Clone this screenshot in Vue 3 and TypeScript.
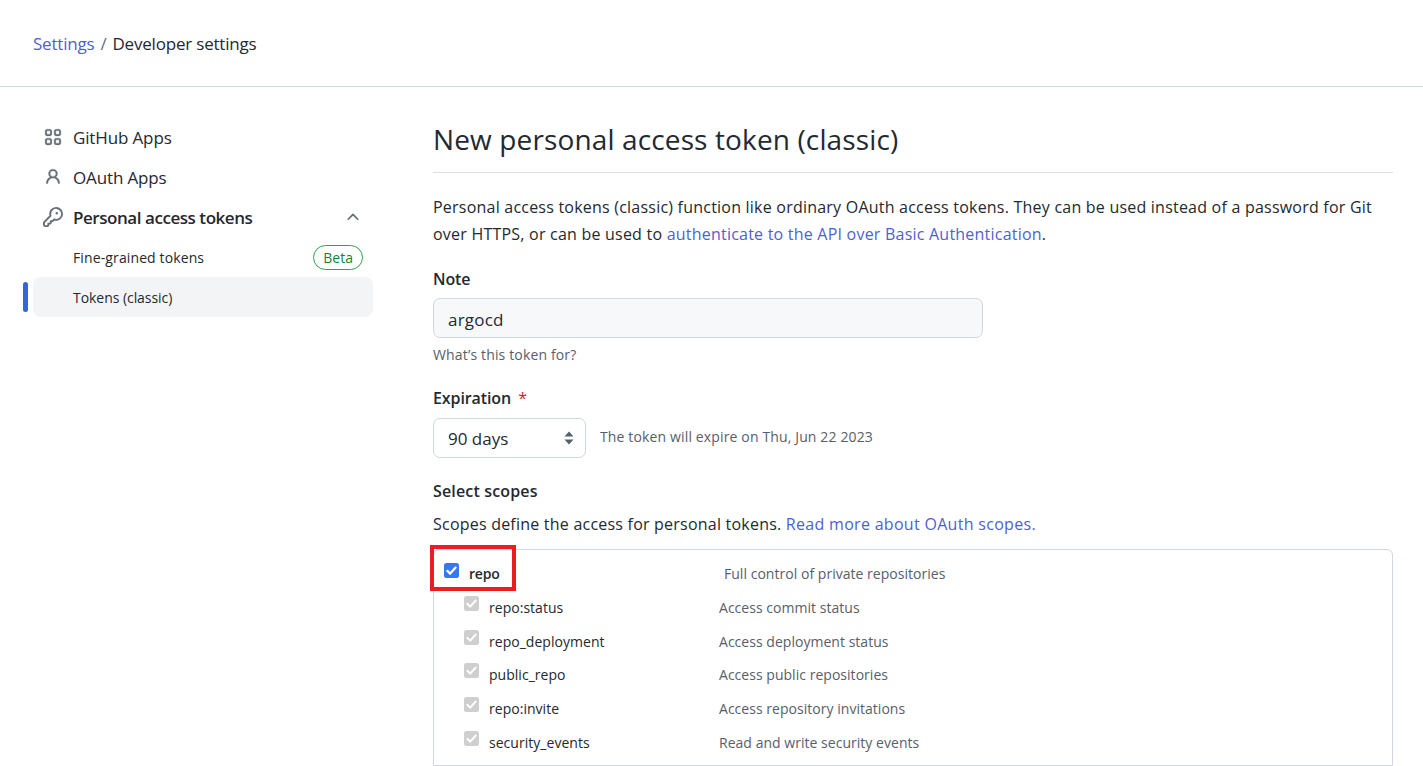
<script setup lang="ts">
const subScopes = [
  { name: 'repo:status', desc: 'Access commit status' },
  { name: 'repo_deployment', desc: 'Access deployment status' },
  { name: 'public_repo', desc: 'Access public repositories' },
  { name: 'repo:invite', desc: 'Access repository invitations' },
  { name: 'security_events', desc: 'Read and write security events' },
]
</script>

<template>
  <div class="page">
    <header class="topbar">
      <a class="link">Settings</a>
      <span class="sep">/</span>
      <span>Developer settings</span>
    </header>

    <div class="layout">
      <nav class="side">
        <div class="nav-row">
          <svg class="nav-icon" viewBox="0 0 16 16" fill="#656d76">
            <path d="M1 2.75C1 1.784 1.784 1 2.75 1h2.5C6.216 1 7 1.784 7 2.75v2.5C7 6.216 6.216 7 5.25 7h-2.5C1.784 7 1 6.216 1 5.25Zm1.75-.25a.25.25 0 0 0-.25.25v2.5c0 .138.112.25.25.25h2.5a.25.25 0 0 0 .25-.25v-2.5a.25.25 0 0 0-.25-.25ZM9 2.75C9 1.784 9.784 1 10.75 1h2.5c.966 0 1.75.784 1.75 1.75v2.5C15 6.216 14.216 7 13.25 7h-2.5C9.784 7 9 6.216 9 5.25Zm1.75-.25a.25.25 0 0 0-.25.25v2.5c0 .138.112.25.25.25h2.5a.25.25 0 0 0 .25-.25v-2.5a.25.25 0 0 0-.25-.25ZM1 10.75C1 9.784 1.784 9 2.75 9h2.5C6.216 9 7 9.784 7 10.75v2.5C7 14.216 6.216 15 5.25 15h-2.5C1.784 15 1 14.216 1 13.25Zm1.75-.25a.25.25 0 0 0-.25.25v2.5c0 .138.112.25.25.25h2.5a.25.25 0 0 0 .25-.25v-2.5a.25.25 0 0 0-.25-.25ZM9 10.75C9 9.784 9.784 9 10.75 9h2.5c.966 0 1.75.784 1.75 1.75v2.5c0 .966-.784 1.75-1.75 1.75h-2.5C9.784 15 9 14.216 9 13.25Zm1.75-.25a.25.25 0 0 0-.25.25v2.5c0 .138.112.25.25.25h2.5a.25.25 0 0 0 .25-.25v-2.5a.25.25 0 0 0-.25-.25Z" />
          </svg>
          <span>GitHub Apps</span>
        </div>
        <div class="nav-row">
          <svg class="nav-icon" viewBox="0 0 16 16" fill="#656d76">
            <path d="M10.561 8.073a6.005 6.005 0 0 1 3.432 5.142.75.75 0 1 1-1.498.07 4.5 4.5 0 0 0-8.99 0 .75.75 0 0 1-1.498-.07 6.004 6.004 0 0 1 3.431-5.142 3.999 3.999 0 1 1 5.123 0ZM10.5 5a2.5 2.5 0 1 0-5 0 2.5 2.5 0 0 0 5 0Z" />
          </svg>
          <span>OAuth Apps</span>
        </div>
        <div class="nav-row strong">
          <svg class="nav-icon key" viewBox="0 0 16 16" fill="#656d76">
            <path d="M10.5 0a5.499 5.499 0 1 1-1.288 10.848l-.932.932a.749.749 0 0 1-.53.22H7v.75a.749.749 0 0 1-.22.53l-.5.5a.749.749 0 0 1-.53.22H5v.75a.749.749 0 0 1-.22.53l-.5.5a.749.749 0 0 1-.53.22h-2A1.75 1.75 0 0 1 0 14.25v-2c0-.199.079-.389.22-.53l4.932-4.932A5.5 5.5 0 0 1 10.5 0Zm-4 5.5c-.001.431.069.86.205 1.269a.75.75 0 0 1-.181.768L1.5 12.56v1.69c0 .138.112.25.25.25h1.69l.06-.06v-1.19a.75.75 0 0 1 .75-.75h1.19l.06-.06v-1.19a.75.75 0 0 1 .75-.75h1.19l1.023-1.025a.75.75 0 0 1 .768-.18A4 4 0 1 0 6.5 5.5ZM11 6a1 1 0 1 1 0-2 1 1 0 0 1 0 2Z" />
          </svg>
          <span class="grow">Personal access tokens</span>
          <svg class="chev" viewBox="0 0 16 16" fill="#656d76">
            <path d="M3.22 10.53a.749.749 0 0 1 0-1.06l4.25-4.25a.749.749 0 0 1 1.06 0l4.25 4.25a.749.749 0 1 1-1.06 1.06L8 6.811 4.28 10.53a.749.749 0 0 1-1.06 0Z" />
          </svg>
        </div>
        <div class="nav-row sub">
          <span class="grow">Fine-grained tokens</span>
          <span class="beta">Beta</span>
        </div>
        <div class="nav-row sub active">
          <span>Tokens (classic)</span>
        </div>
      </nav>

      <main class="main">
        <h1 class="title">New personal access token (classic)</h1>
        <p class="intro">
          Personal access tokens (classic) function like ordinary OAuth access tokens. They can be used instead of a password for Git over HTTPS, or can be used to
          <a class="link">authenticate to the API over Basic Authentication</a>.
        </p>

        <label class="label note-label">Note</label>
        <div class="input">argocd</div>
        <div class="hint">What’s this token for?</div>

        <label class="label exp-label">Expiration <span class="req">*</span></label>
        <div class="exp-row">
          <div class="select">
            <span>90 days</span>
            <svg class="updown" viewBox="0 0 10 16" fill="#57606a">
              <path d="M5 1.5 9.5 6.5H.5ZM5 14.5.5 9.5H9.5Z" />
            </svg>
          </div>
          <span class="hint-inline">The token will expire on Thu, Jun 22 2023</span>
        </div>

        <label class="label scopes-label">Select scopes</label>
        <p class="scopes-text">
          Scopes define the access for personal tokens. <a class="link">Read more about OAuth scopes.</a>
        </p>

        <div class="scopes">
          <div class="scope-parent">
            <div class="marked">
              <span class="check on">
                <svg viewBox="0 0 16 16" fill="none" stroke="#fff" stroke-width="2.4" stroke-linecap="round" stroke-linejoin="round">
                  <path d="M3.6 8.4 6.6 11.3 12.4 4.9" />
                </svg>
              </span>
              <span class="parent-name">repo</span>
            </div>
            <span class="parent-desc">Full control of private repositories</span>
          </div>
          <div v-for="s in subScopes" :key="s.name" class="scope-row">
            <span class="check off">
              <svg viewBox="0 0 16 16" fill="none" stroke="#fff" stroke-width="2.2" stroke-linecap="round" stroke-linejoin="round">
                <path d="M3.6 8.4 6.6 11.3 12.4 4.9" />
              </svg>
            </span>
            <span class="scope-name">{{ s.name }}</span>
            <span class="scope-desc">{{ s.desc }}</span>
          </div>
        </div>
      </main>
    </div>
  </div>
</template>

<style scoped>
.page {
  height: 766px;
  overflow: hidden;
  font-family: "Open Sans", "Noto Sans", sans-serif;
  color: #24292f;
  background: #fff;
}
.link {
  color: #4f5fd0;
}
.topbar {
  height: 86px;
  box-sizing: content-box;
  border-bottom: 1px solid #d0d7de;
  padding-left: 33px;
  display: flex;
  align-items: center;
  font-size: 17px;
  letter-spacing: -0.2px;
}
.sep {
  color: #656d76;
  margin: 0 6px;
}
.layout {
  display: flex;
  padding-top: 30px;
}
.side {
  width: 340px;
  margin-left: 33px;
  flex: none;
  font-size: 17px;
  letter-spacing: -0.14px;
}
.nav-row {
  height: 40px;
  display: flex;
  align-items: center;
  padding: 0 12px;
  position: relative;
}
.nav-icon {
  width: 18px;
  height: 18px;
  margin-right: 11px;
  margin-left: -1px;
  flex: none;
  stroke: #656d76;
  stroke-width: 0.25;
}
.nav-icon.key {
  width: 20px;
  height: 20px;
  margin-left: -2px;
  margin-right: 10px;
  stroke-width: 0;
}
.grow {
  flex: 1;
}
.strong {
  font-weight: 600;
  letter-spacing: -0.45px;
}
.chev {
  width: 18px;
  height: 18px;
  margin-right: -1px;
}
.sub {
  font-size: 14px;
  letter-spacing: 0.12px;
  padding-left: 40px;
}
.active {
  background: #f3f4f6;
  border-radius: 8px;
  letter-spacing: -0.05px;
}
.active::before {
  content: "";
  position: absolute;
  left: -10px;
  top: 5px;
  width: 5px;
  height: 30px;
  border-radius: 3px;
  background: #3366d6;
}
.beta {
  font-size: 14px;
  font-weight: 500;
  color: #1a7f37;
  border: 1px solid #2da44e;
  border-radius: 13px;
  height: 25px;
  line-height: 23px;
  padding: 0 9px;
  margin-right: -2px;
  box-sizing: border-box;
  letter-spacing: 0;
}
.main {
  margin-left: 60px;
  width: 960px;
  flex: none;
}
.title {
  margin: 0;
  height: 55px;
  line-height: 44px;
  font-size: 28px;
  font-weight: 400;
  letter-spacing: 0.13px;
  border-bottom: 1px solid #d8dee4;
}
.intro {
  margin: 21px 0 0;
  font-size: 16px;
  line-height: 27px;
  letter-spacing: 0.22px;
}
.label {
  display: block;
  font-size: 16px;
  font-weight: 600;
  letter-spacing: -0.1px;
  line-height: 22px;
}
.note-label {
  margin-top: 20px;
}
.input {
  margin-top: 8px;
  width: 550px;
  height: 40px;
  box-sizing: border-box;
  background: #f6f8fa;
  border: 1px solid #d0d7de;
  border-radius: 7px;
  padding: 0 14px;
  font-size: 17px;
  line-height: 41px;
  letter-spacing: 0.2px;
}
.hint {
  margin-top: 7px;
  font-size: 14px;
  line-height: 20px;
  color: #57606a;
  letter-spacing: 0.15px;
}
.exp-label {
  margin-top: 22px;
}
.req {
  color: #cf222e;
  margin-left: 3px;
  font-weight: 400;
}
.exp-row {
  display: flex;
  align-items: center;
  margin-top: 9px;
}
.select {
  width: 153px;
  height: 40px;
  box-sizing: border-box;
  border: 1px solid #d0d7de;
  border-radius: 7px;
  padding: 0 11px 0 14px;
  display: flex;
  align-items: center;
  justify-content: space-between;
  font-size: 17px;
  letter-spacing: 0;
}
.updown {
  width: 10px;
  height: 16px;
}
.hint-inline {
  margin-left: 14px;
  margin-top: -3px;
  font-size: 14px;
  color: #57606a;
  letter-spacing: 0.14px;
}
.scopes-label {
  margin-top: 22px;
  letter-spacing: 0.16px;
}
.scopes-text {
  margin: 11px 0 0;
  font-size: 16px;
  line-height: 22px;
  letter-spacing: 0.22px;
}
.scopes-text .link {
  letter-spacing: 0.3px;
}
.scopes {
  position: relative;
  margin-top: 14px;
  border: 1px solid #d0d7de;
  border-radius: 6px 6px 0 0;
  height: 217px;
  box-sizing: border-box;
}
.scope-parent {
  height: 41px;
  display: flex;
  align-items: center;
}
.marked {
  position: relative;
  width: 290px;
  height: 41px;
  flex: none;
  display: flex;
  align-items: center;
}
.marked::after {
  content: "";
  position: absolute;
  left: -4px;
  top: -5px;
  width: 86px;
  height: 46px;
  box-sizing: border-box;
  border: 4px solid #ed1c24;
}
.check {
  width: 15px;
  height: 15px;
  border-radius: 2.5px;
  display: block;
  flex: none;
}
.check svg {
  display: block;
  width: 15px;
  height: 15px;
}
.on {
  background: #3a76f0;
  margin: 0 0 0 10px;
}
.off {
  background: #cfcfcf;
  margin: -8px 0 0 30px;
}
.parent-name {
  margin-left: 10px;
  margin-top: 6px;
  font-size: 14px;
  font-weight: 600;
  letter-spacing: -0.2px;
}
.parent-desc {
  font-size: 14px;
  margin-top: 5px;
  color: #57606a;
  letter-spacing: 0.03px;
}
.scope-row {
  height: 33.7px;
  display: flex;
  align-items: center;
  font-size: 14px;
  letter-spacing: 0.03px;
  position: relative;
  top: -0.5px;
}
.scope-name {
  margin-left: 10px;
  width: 230px;
  flex: none;
}
.scope-desc {
  color: #57606a;
}
</style>

<style>
html, body {
  margin: 0;
  background: #fff;
}
</style>
